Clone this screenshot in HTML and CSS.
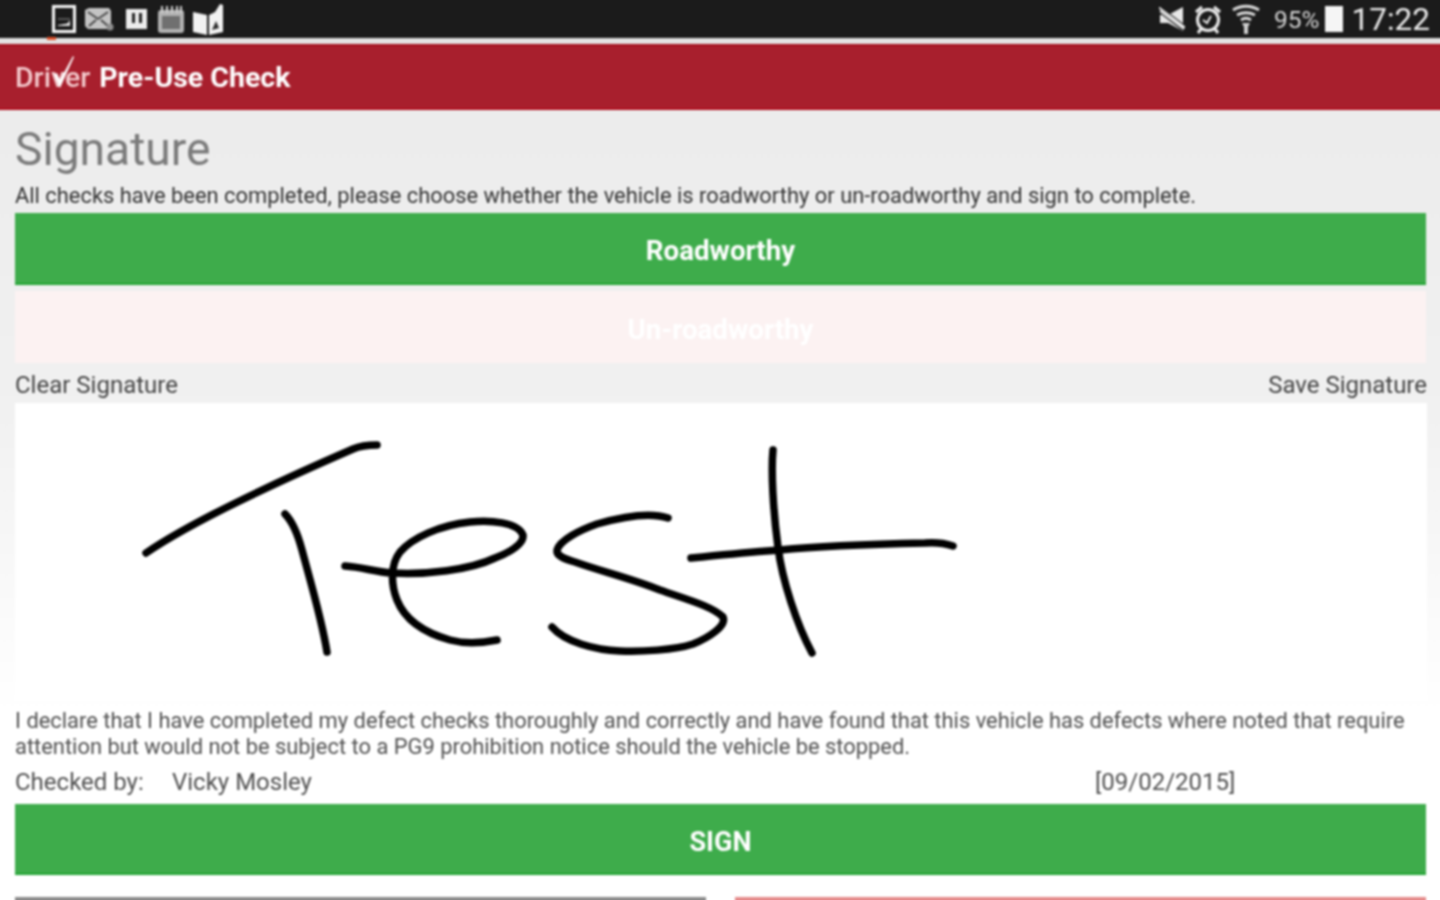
FILE: index.html
```html
<!DOCTYPE html>
<html>
<head>
    <title>Driver Pre-Use Check</title>
    <link rel="stylesheet" href="styles.css">
</head>
<body>
    <div class="page">
    <div class="status-bar">
        <div class="status-left">
            <svg class="icon" width="24" height="28" viewBox="0 0 24 28"><rect x="1.500" y="1.500" width="21" height="25" fill="none" stroke="#f4f4f4" stroke-width="3"/><path d="M6 20c3 0 4-1 6-1 3 0 4-1 6-4v6H6z" fill="#dedede"/><path d="M6 14h12" stroke="#555" stroke-width="2"/></svg>
            <svg class="icon" width="32" height="26" viewBox="0 0 32 26"><path d="M0 4l4-2h20l2 3v16l-2 2H3l-3-3z" fill="#c4c4c4"/><path d="M3 6l10 7 10-7M4 20l7-6M23 20l-7-6" fill="none" stroke="#444" stroke-width="1.800"/><circle cx="25" cy="21" r="3.500" fill="#8f8f8f"/></svg>
            <svg class="icon" width="23" height="20" viewBox="0 0 23 20"><rect width="21" height="20" fill="#ececec"/><rect x="6" y="4" width="3" height="10" fill="#222"/><rect x="13" y="4" width="3" height="10" fill="#222"/></svg>
            <svg class="icon" width="26" height="28" viewBox="0 0 26 28"><rect y="5" width="26" height="23" rx="3" fill="#b2b2b2"/><rect x="4" y="11" width="18" height="13" fill="#707070"/><path d="M4 1v7M9 1v7M14 1v7M19 1v7M23 1v7" stroke="#cfcfcf" stroke-width="2"/></svg>
            <svg class="icon" width="30" height="31" viewBox="0 0 30 31"><path d="M0 8l14 3v20L0 28z" fill="#f2f2f2"/><path d="M16 11l6-3 5-8 3 1v27l-14 3z" fill="#f2f2f2"/><path d="M23 17l3 7-7 2z" fill="#2b2b2b"/></svg>
        </div>
        <div class="status-right">
            <svg class="icon" width="26" height="26" viewBox="0 0 26 26"><path d="M1 9h8L24 1v24L9 17H1z" fill="#e8e8e8"/><path d="M0 3l25 19" stroke="#1b1b1b" stroke-width="6"/><path d="M0 1.500l26 20M1 5l24 18" stroke="#e8e8e8" stroke-width="1.800"/></svg>
            <svg class="icon" width="28" height="29" viewBox="0 0 28 29"><circle cx="14" cy="15" r="10.500" fill="none" stroke="#ececec" stroke-width="3"/><path d="M9 15l4 3 4-7" fill="none" stroke="#ececec" stroke-width="2"/><path d="M2 7l6-5M26 7l-6-5M7 24l-3 4M21 24l3 4" stroke="#ececec" stroke-width="3"/></svg>
            <svg class="icon" width="30" height="30" viewBox="0 0 30 30"><path d="M2 6c8-5 18-5 26 0M6 11c6-3 12-3 18 0M10 16c3-2 7-2 10 0" fill="none" stroke="#dcdcdc" stroke-width="3"/><path d="M11 19h8l-2 4v7h-4v-7z" fill="#cfcfcf"/></svg>
            <span class="battery-text">95%</span>
            <span class="battery"></span>
            <span class="clock">17:22</span>
        </div>
    </div>
    <div class="status-strip"><span class="strip-mark"></span></div>

    <header class="app-header">
        <div class="logo">
            <span class="logo-driver">Driver</span>
            <svg class="logo-tick" width="24" height="36" viewBox="0 0 24 36"><path d="M1 19l3-1 3 7L20 1l1 1L7 33z" fill="#fff"/></svg>
            <span class="logo-rest">Pre-Use Check</span>
        </div>
    </header>

    <main class="content">
        <h1 class="page-title">Signature</h1>
        <p class="intro">All checks have been completed, please choose whether the vehicle is roadworthy or un-roadworthy and sign to complete.</p>

        <button class="big-btn green">Roadworthy</button>
        <button class="big-btn faded">Un-roadworthy</button>

        <div class="sig-links">
            <span>Clear Signature</span>
            <span>Save Signature</span>
        </div>

        <svg class="sig-pad" width="1412" height="297" viewBox="15 403 1412 297">
            <g fill="none" stroke="#000" stroke-width="7.500" stroke-linecap="round" stroke-linejoin="round">
                <path d="M146 553C200 516 300 472 353 449C362 445 370 445 377 445"/>
                <path d="M285 514C293 522 298 535 302 550C310 580 322 620 327 652"/>
                <path d="M345 566C362 567 375 572 392 573C425 575 470 570 495 558C510 552 524 544 523 535C518 522 490 520 470 522C440 525 412 538 400 552C390 565 391 585 397 600C405 620 425 633 450 640C465 644 482 643 497 640"/>
                <path d="M668 518C650 512 625 516 597 524C580 530 560 540 557 550C556 556 565 559 575 562C600 571 630 578 660 590C685 599 712 606 723 617C727 626 708 638 693 644C675 650 640 652 620 651C595 650 565 642 552 627"/>
                <path d="M773 450C771 470 773 510 778 547C782 580 797 625 812 653"/>
                <path d="M691 558C720 555 750 552 780 550C820 546 880 544 925 543C938 542 947 544 953 546"/>
            </g>
        </svg>

        <p class="declare">I declare that I have completed my defect checks thoroughly and correctly and have found that this vehicle has defects where noted that require attention but would not be subject to a PG9 prohibition notice should the vehicle be stopped.</p>

        <div class="checked-row">
            <span class="checked-label">Checked by:</span>
            <span class="checked-name">Vicky Mosley</span>
            <span class="checked-date">[09/02/2015]</span>
        </div>

        <button class="big-btn green sign-btn">SIGN</button>

        <div class="bottom-btns">
            <div class="bottom-btn grey"></div>
            <div class="bottom-btn red"></div>
        </div>
    </main>
    </div>
</body>
</html>
```

FILE: styles.css
```css
html, body {
    margin: 0;
    height: 900px;
    overflow: hidden;
}

body {
    background: #fff;
    font-family: Roboto, "Liberation Sans", sans-serif;
    color: #555;
}

/* the source shot is an upscaled tablet capture, so everything is a bit soft.
   4px bleed on the sides keeps the blur from fading at the window edge */
.page {
    margin: -4px -4px 0;
    filter: blur(0.8px);
}

.status-bar {
    height: 42px;
    box-sizing: border-box;
    background: #1b1b1b;
    display: flex;
    justify-content: space-between;
    align-items: center;
    padding: 4px 14px 0 56px;
}

.status-left, .status-right {
    display: flex;
    align-items: center;
    gap: 9px;
}

.icon {
    display: block;
}

.battery-text {
    font-size: 24.5px;
    color: #d5d5d5;
    margin-left: 4px;
    margin-right: -4px;
}

.battery {
    width: 18px;
    height: 26px;
    background: #f5f5f5;
}

.clock {
    font-size: 31.5px;
    color: #ececec;
}

.status-strip {
    position: relative;
    height: 6px;
    background: #e3e3e3;
}

.strip-mark {
    position: absolute;
    left: 51px;
    top: -1px;
    width: 9px;
    height: 3px;
    background: #e0502a;
}

.app-header {
    height: 66px;
    box-sizing: border-box;
    background: #a81f2d;
    border-top: 2px solid #a5101e;
    border-bottom: 2px solid #b01020;
    padding-left: 19px;
    display: flex;
    align-items: center;
}

.logo {
    position: relative;
    font-size: 28.5px;
    font-weight: 700;
    color: #fff;
    display: flex;
    gap: 9px;
}

.logo-driver {
    font-weight: 500;
    color: #f3c9cc;
}

.logo-tick {
    position: absolute;
    left: 38px;
    top: -6px;
}

.content {
    padding: 0 18px 0 19px;
    background: linear-gradient(#ececec 0, #f1f1f1 300px, #fff 600px);
}

.page-title {
    margin: 0;
    height: 75px;
    line-height: 78px;
    font-size: 46.2px;
    font-weight: 400;
    color: #7b7b7b;
}

.intro {
    margin: 0;
    height: 28px;
    line-height: 22px;
    font-size: 21.9px;
    color: #333;
    white-space: nowrap;
}

.big-btn {
    display: block;
    width: 100%;
    height: 72px;
    border: none;
    border-radius: 0;
    font-family: inherit;
    font-size: 27.7px;
    font-weight: 700;
    color: #fff;
    padding: 4px 0 0;
}

.green {
    background: #3eac4b;
    border-bottom: 2px solid #22a434;
}

.faded {
    background: #fcf2f2;
    margin-top: 6px;
    padding-top: 4px;
}

.sig-links {
    height: 40px;
    box-sizing: border-box;
    padding-top: 4px;
    display: flex;
    justify-content: space-between;
    align-items: center;
    font-size: 24px;
    color: #444;
    margin-right: -1px;
}

.sig-pad {
    display: block;
    background: #fff;
}

.declare {
    margin: 8px 0 0;
    font-size: 21.9px;
    line-height: 26px;
    color: #505050;
}

.checked-row {
    margin-top: 6px;
    height: 32px;
    display: flex;
    align-items: center;
    font-size: 24px;
    color: #505050;
}

.checked-label {
    width: 157px;
}

.checked-name {
    width: 923px;
}

.sign-btn {
    margin-top: 6px;
    height: 71px;
    padding-top: 7px;
    font-size: 27px;
}

.bottom-btns {
    margin-top: 22px;
    display: flex;
    gap: 29px;
}

.bottom-btn {
    flex: 1;
    height: 40px;
}

.grey {
    background: #8a8a8a;
}

.red {
    background: #e58a8a;
}
```
